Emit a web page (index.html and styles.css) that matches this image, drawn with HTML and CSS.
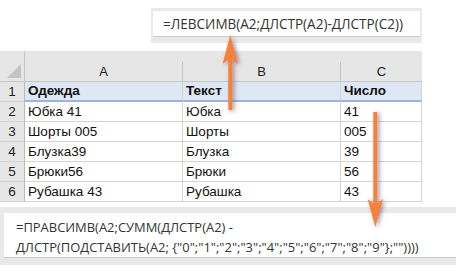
FILE: index.html
```html
<!DOCTYPE html>
<html>
<head>
<meta charset="utf-8">
<link rel="stylesheet" href="styles.css">
</head>
<body>
<div class="page">
  <div class="top">
    <div class="fbox">
      <div class="ftext">=ЛЕВСИМВ(A2;ДЛСТР(A2)-ДЛСТР(C2))</div>
    </div>
  </div>
  <div class="sheet">
    <div class="hd corner"><span class="tri"></span></div>
    <div class="hd col"><span>A</span></div>
    <div class="hd col"><span>B</span></div>
    <div class="hd col last"><span>C</span></div>

    <div class="rn r1">1</div>
    <div class="c r1 b">Одежда</div>
    <div class="c r1 b">Текст</div>
    <div class="c r1 b">Число</div>

    <div class="rn">2</div>
    <div class="c">Юбка 41</div>
    <div class="c">Юбка</div>
    <div class="c">41</div>

    <div class="rn">3</div>
    <div class="c">Шорты 005</div>
    <div class="c">Шорты</div>
    <div class="c">005</div>

    <div class="rn">4</div>
    <div class="c">Блузка39</div>
    <div class="c">Блузка</div>
    <div class="c">39</div>

    <div class="rn">5</div>
    <div class="c">Брюки56</div>
    <div class="c">Брюки</div>
    <div class="c">56</div>

    <div class="rn">6</div>
    <div class="c">Рубашка 43</div>
    <div class="c">Рубашка</div>
    <div class="c">43</div>
  </div>
  <div class="bottom">
    <div class="fbox2">
      <div class="fline">=ПРАВСИМВ(A2;СУММ(ДЛСТР(A2) -</div>
      <div class="fline">ДЛСТР(ПОДСТАВИТЬ(A2; {"0";"1";"2";"3";"4";"5";"6";"7";"8";"9"};""))))</div>
    </div>
  </div>
  <svg class="arrows" width="456" height="275" viewBox="0 0 456 275">
    <defs>
      <filter id="sh" x="-50%" y="-20%" width="200%" height="140%">
        <feGaussianBlur in="SourceAlpha" stdDeviation="2"/>
        <feOffset dx="2" dy="1" result="b"/>
        <feFlood flood-color="#5a3a5a" flood-opacity="0.55"/>
        <feComposite in2="b" operator="in"/>
        <feMerge><feMergeNode/><feMergeNode in="SourceGraphic"/></feMerge>
      </filter>
    </defs>
    <g filter="url(#sh)" fill="#f5823a">
      <rect x="228.3" y="58" width="4" height="52"/>
      <polygon points="230.3,35 238,64 230.3,58 222.6,64"/>
      <rect x="373.3" y="112" width="4" height="94"/>
      <polygon points="375.3,227 383,199 375.3,205 367.6,199"/>
    </g>
  </svg>
</div>
</body>
</html>
```
FILE: styles.css
```css
html, body {
  margin: 0;
  padding: 0;
  background: #ffffff;
}
.page {
  position: relative;
  width: 456px;
  height: 275px;
  overflow: hidden;
}
.top {
  height: 51px;
  padding-top: 8px;
  padding-left: 151px;
  box-sizing: border-box;
}
.fbox {
  width: 271px;
  height: 35px;
  background: #e9e9e9;
  padding: 3px 2px 6px 2px;
  box-sizing: border-box;
}
.ftext {
  height: 26px;
  background: #ffffff;
  border-bottom: 1px solid #c9c9c9;
  box-sizing: border-box;
  padding: 3px 0 0 10px;
  font-family: "Open Sans", sans-serif;
  font-size: 13.55px;
  line-height: 20px;
  color: #333333;
  white-space: nowrap;
}
.sheet {
  width: 422px;
  display: grid;
  grid-template-columns: 25px 158px 158px 81px;
  grid-template-rows: 31px repeat(6, 20px);
  font-family: "Liberation Sans", sans-serif;
  font-size: 13.5px;
  color: #111111;
}
.hd {
  background: #e6e6e6;
  display: flex;
  align-items: flex-end;
  justify-content: center;
  border-bottom: 1px solid #c6c6c6;
  box-sizing: border-box;
}
.hd.col span {
  display: block;
  width: 100%;
  height: 19px;
  line-height: 19px;
  text-align: center;
  border-right: 1px solid #c2c2c2;
  box-sizing: border-box;
  color: #222222;
  font-size: 13px;
}
.hd.col.last span {
  border-right: none;
}
.corner {
  border-right: 1px solid #c6c6c6;
  position: relative;
}
.tri {
  position: absolute;
  right: 3px;
  bottom: 3px;
  width: 0;
  height: 0;
  border-left: 14px solid transparent;
  border-bottom: 14px solid #c4c4c4;
}
.rn {
  background: #e6e6e6;
  border-right: 1px solid #b9b9b9;
  border-bottom: 1px solid #d4d4d4;
  box-sizing: border-box;
  text-align: center;
  line-height: 19px;
  color: #222222;
}
.c {
  border-right: 1px solid #d4d4d4;
  border-bottom: 1px solid #d4d4d4;
  box-sizing: border-box;
  padding-left: 3px;
  line-height: 19px;
  white-space: nowrap;
  overflow: hidden;
}
.c.r1 {
  background: #dde8f4;
  border-bottom: 2px solid #9bb3df;
  line-height: 18px;
}
.b {
  font-weight: bold;
}
.bottom {
  margin-top: 5px;
  height: 58px;
  background: #e9e9e9;
  padding: 6px 0 7px 4px;
  box-sizing: border-box;
}
.fbox2 {
  height: 45px;
  background: #ffffff;
  border-bottom: 1px solid #c9c9c9;
  box-sizing: border-box;
  padding: 4px 0 0 12px;
  font-family: "Open Sans", sans-serif;
  font-size: 12.95px;
  line-height: 20px;
  color: #333333;
  white-space: nowrap;
}
.arrows {
  position: absolute;
  left: 0;
  top: 0;
  pointer-events: none;
}
```
